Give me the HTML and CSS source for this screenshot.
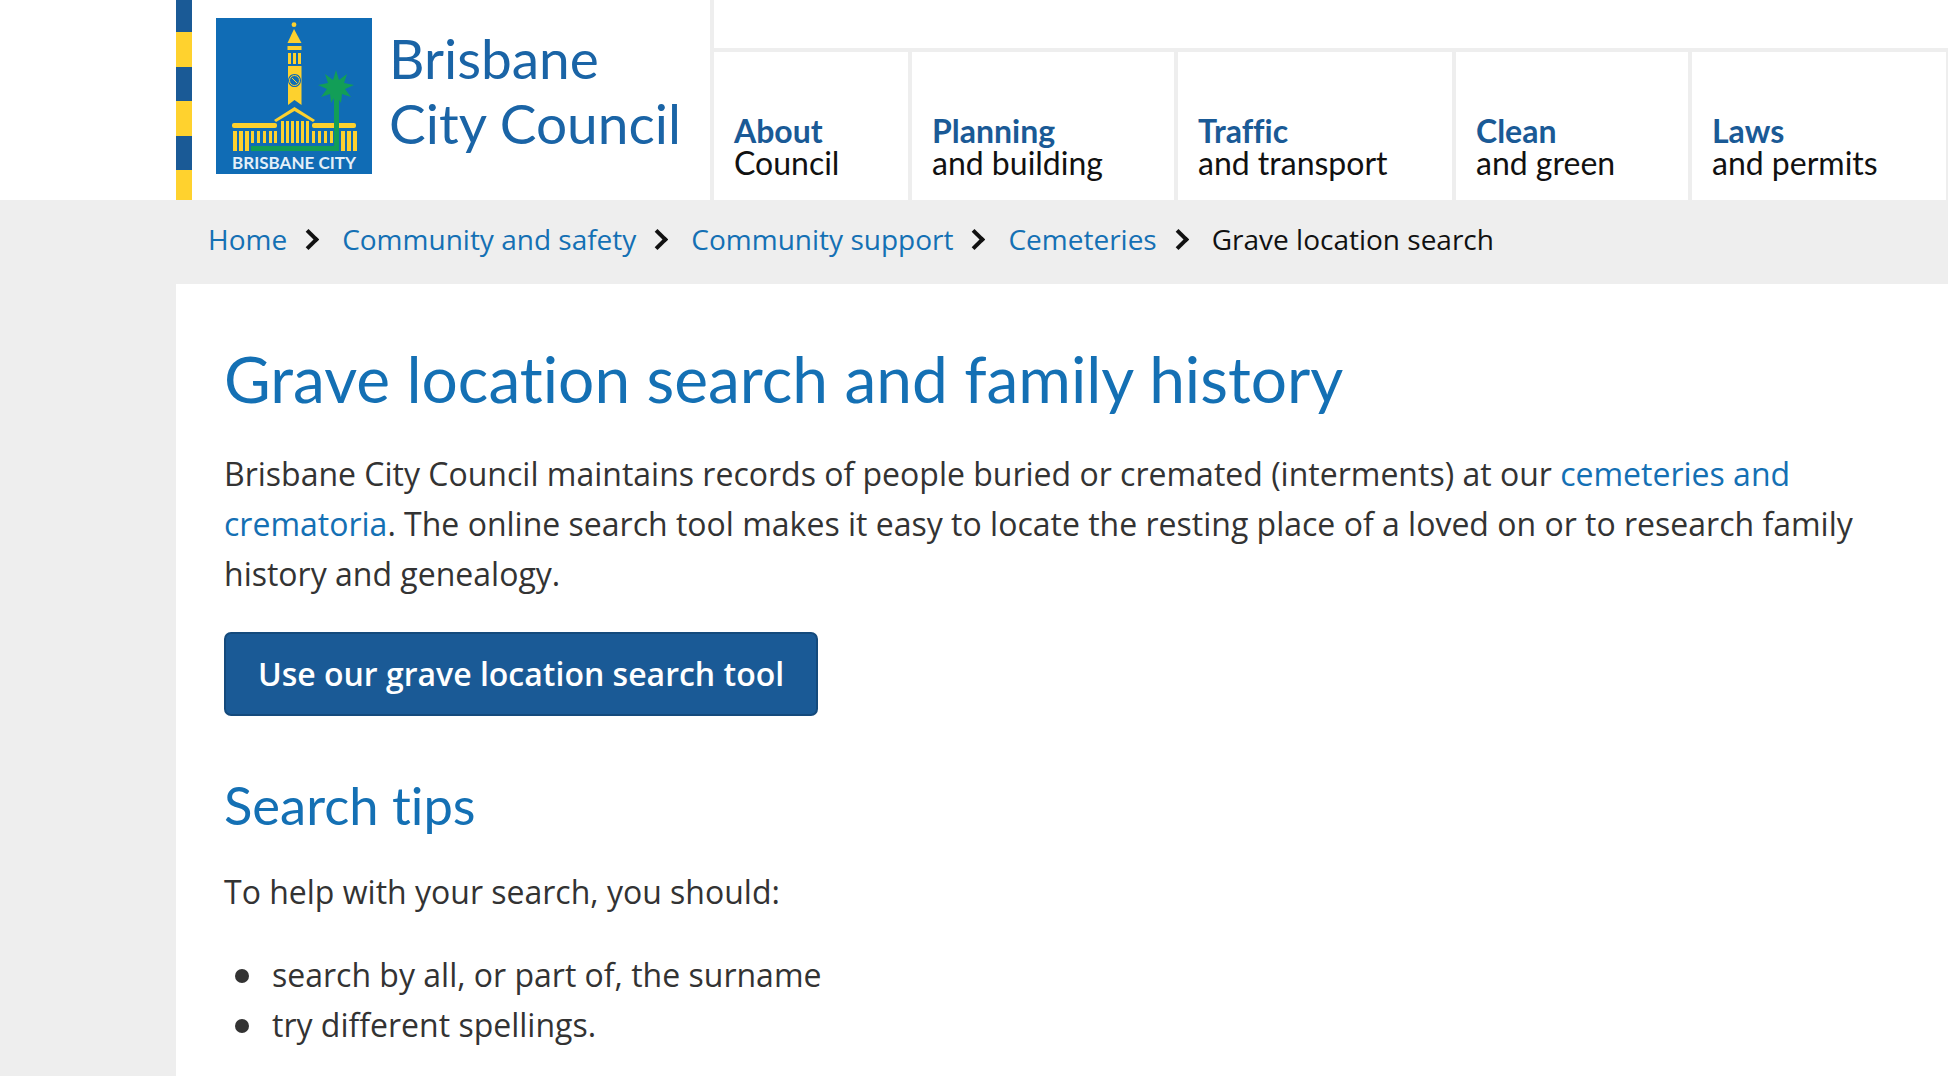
FILE: index.html
```html
<!DOCTYPE html>
<html lang="en">
<head>
    <meta charset="UTF-8">
    <meta name="viewport" content="width=device-width, initial-scale=1.0">
    <title>Grave location search and family history</title>
    <link rel="stylesheet" href="styles.css">
</head>
<body>
    <header class="site-header">
        <div class="stripe"></div>
        <a class="brand" href="#">
            <svg class="logo" viewBox="0 0 156 156" role="img" aria-label="Brisbane City logo">
                <rect width="156" height="156" fill="#106cb5"/>
                <g fill="#fdd12e">
                    <circle cx="78" cy="6.7" r="2.4"/>
                    <path d="M78 11 L85.5 25 H71.5 Z"/>
                    <rect x="71.5" y="28" width="14" height="4"/>
                    <rect x="72" y="35" width="3" height="11"/>
                    <rect x="77" y="35" width="3" height="11"/>
                    <rect x="82" y="35" width="3" height="11"/>
                    <path fill-rule="evenodd" d="M72 48 H85.5 V87 L78.5 82 L72 87 Z M78.5 56 a6.5 6.5 0 1 0 .01 0 Z"/>
                    <path d="M78.5 89 L99 102 L97 104 L78.5 93 L60 104 L58 102 Z"/>
                    <rect x="16" y="105" width="45" height="5" rx="2"/>
                    <rect x="96" y="105" width="44" height="5" rx="2"/>
                    <path d="M65 103 h3 v22 h-3 Z M70 103 h3 v22 h-3 Z M75 103 h3 v22 h-3 Z M80 103 h3 v22 h-3 Z M85 103 h3 v22 h-3 Z M90 103 h3 v22 h-3 Z"/>
                    <path d="M17 113 h4 v20 h-4 Z M23 113 h4 v20 h-4 Z M29 113 h4 v20 h-4 Z"/>
                    <path d="M35 113 h3 v12 h-3 Z M41 113 h3 v12 h-3 Z M47 113 h3 v12 h-3 Z M53 113 h3 v12 h-3 Z M58 113 h3 v12 h-3 Z"/>
                    <path d="M96 113 h3 v12 h-3 Z M102 113 h3 v12 h-3 Z M108 113 h3 v12 h-3 Z M114 113 h3 v12 h-3 Z"/>
                    <path d="M125 113 h4 v20 h-4 Z M131 113 h4 v20 h-4 Z M137 113 h4 v20 h-4 Z"/>
                </g>
                <circle cx="78.5" cy="62.5" r="5" fill="#106cb5" stroke="#fdd12e" stroke-width="1"/>
                <path d="M76 60 L79 63 L81 65" fill="none" stroke="#fdd12e" stroke-width="1"/>
                <g fill="#129e57">
                    <path d="M120 52 L123 62 L131 56 L128 65 L138 67 L129 71 L135 79 L126 76 L125 85 L120 77 L115 85 L114 76 L105 79 L111 71 L102 67 L112 65 L109 56 L117 62 Z"/>
                    <rect x="118" y="72" width="5" height="61"/>
                    <rect x="35" y="128" width="88" height="5"/>
                </g>
                <text class="logo-text" x="78" y="151" text-anchor="middle">BRISBANE CITY</text>
            </svg>
            <span class="brand-name">Brisbane<br>City Council</span>
        </a>
        <div class="header-right">
            <div class="top-bar"></div>
            <nav class="main-nav">
                <a class="nav-item nav-about" href="#"><b>About</b>Council</a>
                <a class="nav-item nav-planning" href="#"><b>Planning</b>and building</a>
                <a class="nav-item nav-traffic" href="#"><b>Traffic</b>and transport</a>
                <a class="nav-item nav-clean" href="#"><b>Clean</b>and green</a>
                <a class="nav-item nav-laws" href="#"><b>Laws</b>and permits</a>
            </nav>
        </div>
    </header>

    <div class="breadcrumb">
        <a href="#">Home</a><span class="sep"></span>
        <a href="#">Community and safety</a><span class="sep"></span>
        <a href="#">Community support</a><span class="sep"></span>
        <a href="#">Cemeteries</a><span class="sep"></span>
        <span class="current">Grave location search</span>
    </div>

    <main class="content">
        <h1>Grave location search and family history</h1>
        <p>Brisbane City Council maintains records of people buried or cremated (interments) at our <a href="#">cemeteries and crematoria</a>. The online search tool makes it easy to locate the resting place of a loved on or to research family history and genealogy.</p>
        <a class="btn" href="#">Use our grave location search tool</a>
        <h2>Search tips</h2>
        <p>To help with your search, you should:</p>
        <ul>
            <li>search by all, or part of, the surname</li>
            <li>try different spellings.</li>
        </ul>
    </main>
</body>
</html>
```

FILE: styles.css
```css
html, body {
    height: 100%;
}
body {
    margin: 0;
    background: #eeeeee;
    font-family: "Open Sans", "Noto Sans", sans-serif;
    color: #333333;
    overflow: hidden;
}
a {
    color: #1470b4;
    text-decoration: none;
}

/* header */
.site-header {
    display: flex;
    height: 200px;
    background: #ffffff;
    padding-left: 176px;
}
.stripe {
    width: 16px;
    background: linear-gradient(#1a5a96 0 32px, #ffd22e 32px 67px, #1a5a96 67px 101px, #ffd22e 101px 136px, #1a5a96 136px 170px, #ffd22e 170px);
}
.brand {
    display: flex;
    width: 518px;
    padding: 18px 0 0 24px;
    box-sizing: border-box;
    color: #1a64a6;
}
.logo {
    width: 156px;
    height: 156px;
    flex: none;
}
.logo-text {
    font-family: "Lato", sans-serif;
    font-weight: 700;
    font-size: 17px;
    fill: #e4eff8;
}
.brand-name {
    margin: 8px 0 0 17px;
    font-family: "Lato", sans-serif;
    font-size: 55px;
    line-height: 65px;
    white-space: nowrap;
    font-variant-ligatures: none;
}
.header-right {
    flex: 1;
    display: flex;
    flex-direction: column;
    padding-left: 4px;
    background: #eeeeee;
}
.top-bar {
    height: 48px;
    background: #ffffff;
    margin-bottom: 4px;
}
.main-nav {
    flex: 1;
    display: flex;
    gap: 4px;
    padding-right: 2px;
}
.nav-item {
    display: flex;
    flex-direction: column;
    justify-content: flex-end;
    box-sizing: border-box;
    padding: 0 0 21px 20px;
    background: #ffffff;
    color: #111111;
    font-family: "Lato", sans-serif;
    font-size: 32px;
    line-height: 32px;
    font-variant-ligatures: none;
}
.nav-item b {
    color: #1a5a96;
    font-weight: 700;
}
.nav-about { width: 194px; }
.nav-planning { width: 262px; }
.nav-traffic { width: 274px; }
.nav-clean { width: 232px; }
.nav-laws { flex: 1; }

/* breadcrumb */
.breadcrumb {
    display: flex;
    align-items: center;
    height: 84px;
    padding: 0 0 6px 208px;
    box-sizing: border-box;
    font-size: 28px;
    color: #111111;
}
.sep {
    width: 11px;
    height: 11px;
    margin: 0 26px 0 14px;
    border-top: 4px solid #111111;
    border-right: 4px solid #111111;
    transform: rotate(45deg);
}

/* main content */
.content {
    margin-left: 176px;
    padding: 59px 48px 0;
    background: #ffffff;
    height: 792px;
    box-sizing: border-box;
}
h1 {
    margin: 0 0 34px;
    font-family: "Lato", sans-serif;
    font-size: 64px;
    font-weight: 400;
    line-height: 72px;
    color: #1470b4;
    font-variant-ligatures: none;
}
h2 {
    margin: 59px 0 32px;
    font-family: "Lato", sans-serif;
    font-size: 52.5px;
    font-weight: 400;
    line-height: 60px;
    color: #1470b4;
    font-variant-ligatures: none;
}
p {
    margin: 0 0 33px;
    font-size: 32px;
    line-height: 50px;
}
.btn {
    display: block;
    box-sizing: border-box;
    width: 594px;
    height: 84px;
    background: #1a5a96;
    border: 2px solid #144a7c;
    border-radius: 7px;
    color: #ffffff;
    font-size: 32px;
    font-weight: 600;
    line-height: 80px;
    text-align: center;
}
ul {
    margin: 0;
    padding: 0;
    list-style: none;
    font-size: 32px;
    line-height: 50px;
}
li {
    display: flex;
    align-items: center;
}
li::before {
    content: "";
    width: 14px;
    height: 14px;
    margin: 2px 23px 0 11px;
    border-radius: 50%;
    background: #333333;
}
```
